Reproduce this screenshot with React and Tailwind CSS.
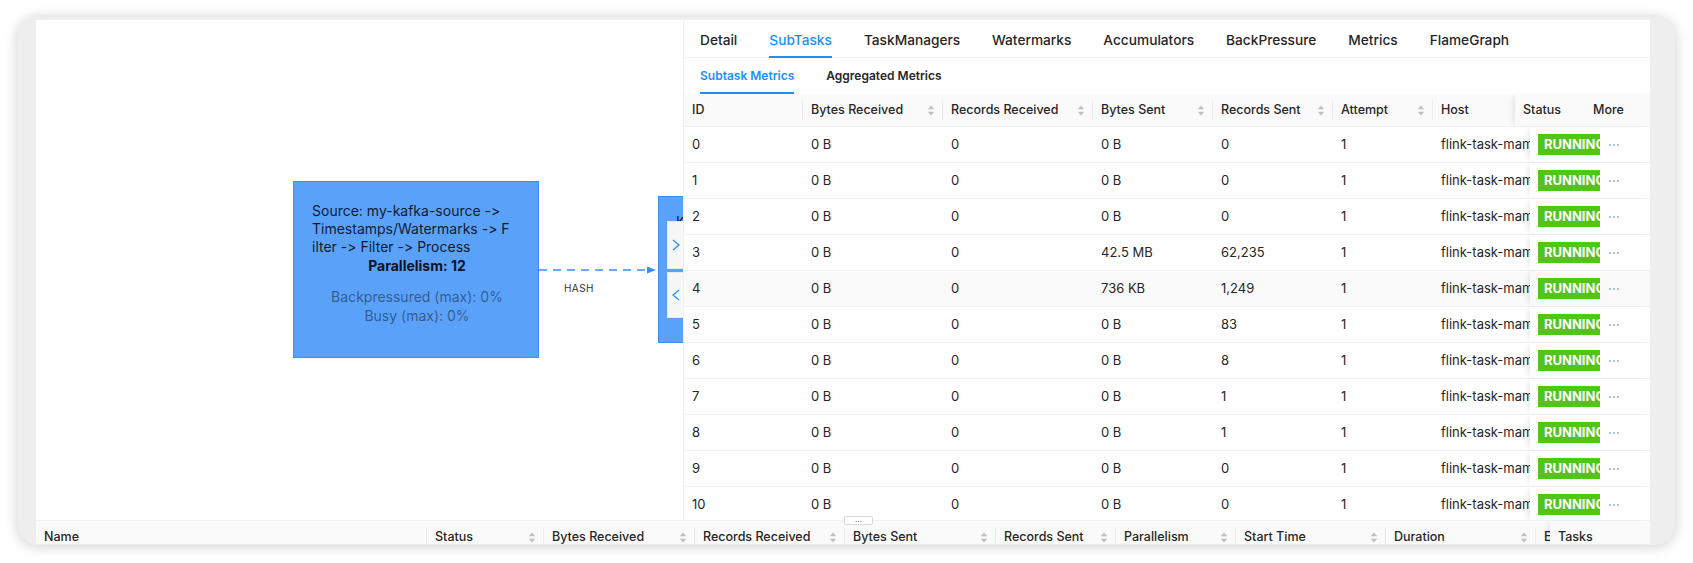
import React from 'react'

// Tabs across the top of the vertex panel
const TABS = ['Detail', 'SubTasks', 'TaskManagers', 'Watermarks', 'Accumulators', 'BackPressure', 'Metrics', 'FlameGraph']

// Subtask table columns (widths measured from the reference)
const COLS = [
  { title: 'ID', w: 'w-[119px]' },
  { title: 'Bytes Received', w: 'w-[140px]', sort: true },
  { title: 'Records Received', w: 'w-[150px]', sort: true },
  { title: 'Bytes Sent', w: 'w-[120px]', sort: true },
  { title: 'Records Sent', w: 'w-[120px]', sort: true },
  { title: 'Attempt', w: 'w-[100px]', sort: true },
]

const ROWS = [
  ['0', '0 B', '0', '0 B', '0', '1'],
  ['1', '0 B', '0', '0 B', '0', '1'],
  ['2', '0 B', '0', '0 B', '0', '1'],
  ['3', '0 B', '0', '42.5 MB', '62,235', '1'],
  ['4', '0 B', '0', '736 KB', '1,249', '1'],
  ['5', '0 B', '0', '0 B', '83', '1'],
  ['6', '0 B', '0', '0 B', '8', '1'],
  ['7', '0 B', '0', '0 B', '1', '1'],
  ['8', '0 B', '0', '0 B', '1', '1'],
  ['9', '0 B', '0', '0 B', '0', '1'],
  ['10', '0 B', '0', '0 B', '0', '1'],
]

// Job vertex list columns in the bottom drawer
const JOB_COLS = [
  { title: 'Name', w: 'w-[391px]' },
  { title: 'Status', w: 'w-[117px]', sort: true },
  { title: 'Bytes Received', w: 'w-[151px]', sort: true },
  { title: 'Records Received', w: 'w-[150px]', sort: true },
  { title: 'Bytes Sent', w: 'w-[151px]', sort: true },
  { title: 'Records Sent', w: 'w-[120px]', sort: true },
  { title: 'Parallelism', w: 'w-[120px]', sort: true },
  { title: 'Start Time', w: 'w-[150px]', sort: true },
  { title: 'Duration', w: 'w-[150px]', sort: true },
]

function SortIcon() {
  return (
    <svg width="8" height="13" viewBox="0 0 8 13" className="shrink-0">
      <path d="M4 1.5L7.2 5.2H0.8z" fill="#bfbfbf" />
      <path d="M4 11.5L0.8 7.8H7.2z" fill="#bfbfbf" />
    </svg>
  )
}

function HeadCell({ col, last }) {
  return (
    <div className={`${col.w} relative flex shrink-0 items-center justify-between px-2`}>
      <span className="whitespace-nowrap">{col.title}</span>
      {col.sort && <SortIcon />}
      {!last && <span className="absolute right-0 top-1/2 h-[20px] w-px -translate-y-1/2 bg-[#ececec]" />}
    </div>
  )
}

function Dots() {
  return (
    <span className="flex items-center gap-[2px]">
      <span className="h-[2px] w-[2px] rounded-full bg-[#7fb3f5]" />
      <span className="h-[2px] w-[2px] rounded-full bg-[#7fb3f5]" />
      <span className="h-[2px] w-[2px] rounded-full bg-[#7fb3f5]" />
    </span>
  )
}

function GraphCanvas() {
  return (
    <div className="relative h-full w-[647px] shrink-0 overflow-hidden bg-white">
      {/* source vertex */}
      <div className="absolute left-[257px] top-[161px] h-[177px] w-[246px] border border-[#3d8cf2] bg-[#5aa1f9] pl-[18px] pr-2 pt-[20px] text-[14px] leading-[18px]">
        <div className="text-black/85">
          Source: my-kafka-source -&gt;
          <br />
          Timestamps/Watermarks -&gt; F
          <br />
          ilter -&gt; Filter -&gt; Process
        </div>
        <div className="mt-px pr-2 text-center font-bold text-black/90">Parallelism: 12</div>
        <div className="mt-[12px] pr-2 text-center leading-[19px] text-black/45">
          Backpressured (max): 0%
          <br />
          Busy (max): 0%
        </div>
      </div>

      {/* edge */}
      <svg className="absolute left-[503px] top-[244px]" width="120" height="12" viewBox="0 0 120 12">
        <line x1="0" y1="6" x2="110" y2="6" stroke="#3d8cf2" strokeWidth="1.3" strokeDasharray="8 6" />
        <path d="M108 2.5L117 6L108 9.5z" fill="#3d8cf2" />
      </svg>
      <span className="absolute left-[528px] top-[261px] text-[10px] tracking-[0.4px] text-[#333]">HASH</span>

      {/* downstream vertex, mostly behind the panel */}
      <div className="absolute left-[622px] top-[176px] h-[147px] w-[220px] border border-[#3d8cf2] bg-[#5aa1f9] pl-[17px] pt-[16px] text-[14px] leading-[18px] text-black/85">
        KeyedProcess -&gt; Sink
      </div>
      <div className="absolute left-[631px] top-[201px] flex h-[48px] w-[40px] items-center border border-[#e8e8e8] bg-[#f7f7f7] pl-[4px]">
        <svg width="8" height="12" viewBox="0 0 8 12">
          <path d="M1 1L7 6L1 11" fill="none" stroke="#1890ff" strokeWidth="1.2" />
        </svg>
      </div>
      <div className="absolute left-[631px] top-[252px] flex h-[46px] w-[40px] items-center border border-[#e8e8e8] bg-[#f7f7f7] pl-[4px]">
        <svg width="8" height="12" viewBox="0 0 8 12">
          <path d="M7 1L1 6L7 11" fill="none" stroke="#1890ff" strokeWidth="1.2" />
        </svg>
      </div>
    </div>
  )
}

function SubtaskPanel() {
  return (
    <div className="flex h-full w-[967px] shrink-0 flex-col overflow-hidden border-l border-[#f0f0f0] bg-white">
      {/* main tabs */}
      <div className="flex h-[38px] shrink-0 gap-8 border-b border-[#f0f0f0] px-4 pt-1 text-[13.7px] font-medium">
        {TABS.map((t) => (
          <div
            key={t}
            className={`relative flex items-center ${t === 'SubTasks' ? 'text-[#1890ff]' : 'text-[#262626]'}`}
          >
            {t}
            {t === 'SubTasks' && <span className="absolute -bottom-px left-0 right-0 h-[2px] bg-[#1890ff]" />}
          </div>
        ))}
      </div>

      {/* sub tabs */}
      <div className="flex h-[36px] shrink-0 gap-8 px-4 text-[12px] font-semibold">
        <div className="relative flex items-center text-[#1890ff]">
          Subtask Metrics
          <span className="absolute bottom-0 left-0 right-0 h-[2px] bg-[#1890ff]" />
        </div>
        <div className="flex items-center text-[#262626]">Aggregated Metrics</div>
      </div>

      {/* table header */}
      <div className="flex h-[33px] shrink-0 border-b border-[#f0f0f0] bg-[#fafafa] text-[12.5px] font-medium text-[#262626]">
        {COLS.map((c) => (
          <HeadCell key={c.title} col={c} />
        ))}
        <div className="flex flex-1 items-center px-2">Host</div>
        <div className="flex w-[135px] shrink-0 items-center bg-[#fafafa] shadow-[-5px_0_6px_-3px_rgba(0,0,0,0.1)]">
          <span className="w-[70px] pl-2">Status</span>
          <span className="pl-2">More</span>
        </div>
      </div>

      {/* rows */}
      {ROWS.map((r, i) => (
        <div
          key={r[0]}
          className={`flex h-[36px] shrink-0 border-b border-[#f0f0f0] text-[13px] text-[#262626] ${i === 4 ? 'bg-[#fafafa]' : 'bg-white'}`}
        >
          {COLS.map((c, j) => (
            <div key={c.title} className={`${c.w} flex shrink-0 items-center px-2`}>
              {r[j]}
            </div>
          ))}
          <div className="flex flex-1 items-center overflow-hidden whitespace-nowrap px-2">flink-task-mamager-0</div>
          <div
            className={`flex w-[120px] shrink-0 items-center pl-2 shadow-[-5px_0_6px_-3px_rgba(0,0,0,0.1)] ${i === 4 ? 'bg-[#fafafa]' : 'bg-white'}`}
          >
            <span className="flex h-[21px] w-[62px] shrink-0 items-center overflow-hidden bg-[#52c41a] pl-[6px] text-[13px] font-bold text-white">
              RUNNING
            </span>
            <span className="ml-[9px]">
              <Dots />
            </span>
          </div>
        </div>
      ))}
    </div>
  )
}

function JobHeader() {
  return (
    <div className="flex h-[34px] shrink-0 border-t border-[#f0f0f0] bg-[#fafafa] text-[12.5px] font-medium text-[#262626]">
      {JOB_COLS.map((c) => (
        <HeadCell key={c.title} col={c} />
      ))}
      <div className="flex w-[14px] shrink-0 items-center overflow-hidden pl-2">End</div>
      <div className="flex w-[100px] shrink-0 items-center bg-[#fafafa] pl-2 shadow-[-5px_0_6px_-3px_rgba(0,0,0,0.1)]">
        Tasks
      </div>
    </div>
  )
}

export default function App() {
  return (
    <div className="h-[563px] w-[1693px] overflow-hidden bg-white pl-[18px] pt-[17px] font-[Inter,sans-serif] [font-feature-settings:'calt'_0,'liga'_0]">
      <div className="h-[528px] w-[1657px] overflow-hidden rounded-[20px] bg-[#eeeeee] pb-px pl-[18px] pr-[25px] pt-[3px] shadow-[0_1px_14px_rgba(0,0,0,0.2)]">
        <div className="relative flex h-[524px] w-[1614px] flex-col overflow-hidden bg-white">
          <div className="flex h-[500px] shrink-0">
            <GraphCanvas />
            <SubtaskPanel />
          </div>
          <JobHeader />

          {/* drawer resize handle */}
          <div className="absolute left-[808px] top-[496px] flex h-[9px] w-[29px] items-center justify-center rounded-[2px] border border-[#d9d9d9] bg-white text-[8px] leading-none text-[#555]">
            ···
          </div>
        </div>
      </div>
    </div>
  )
}
